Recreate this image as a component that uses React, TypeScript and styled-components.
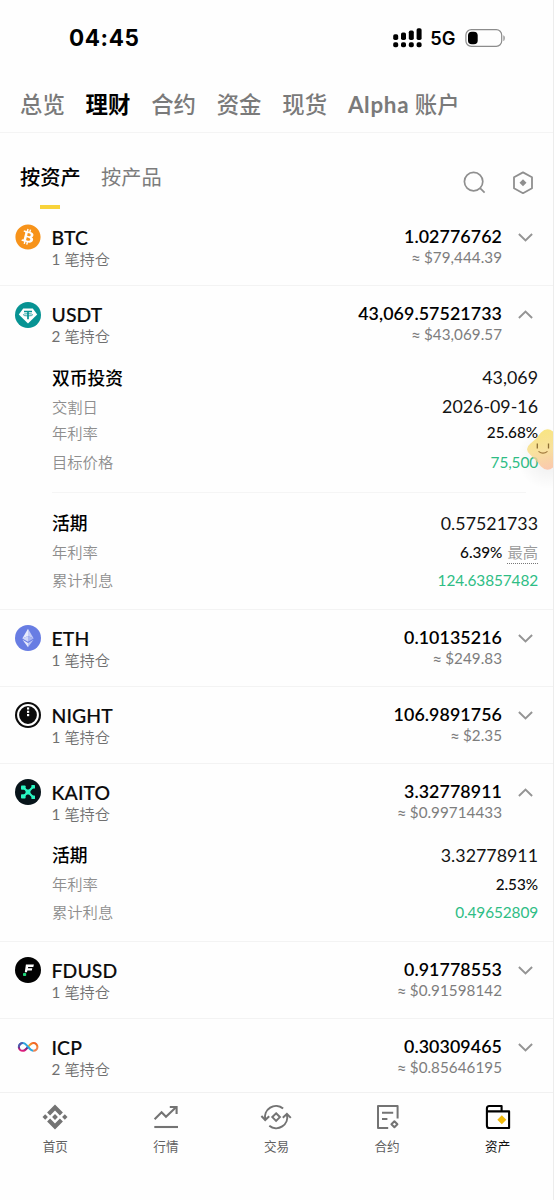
import React from "react";
import styled, { createGlobalStyle, css } from "styled-components";
import { FaBitcoin } from "react-icons/fa";

const GlobalStyle = createGlobalStyle`
  * { box-sizing: border-box; }
  body {
    margin: 0;
    background: #fefefe;
    font-family: Lato, "Noto Sans CJK SC", sans-serif;
    color: #0b0b0c;
  }
`;

const Screen = styled.div`
  position: relative;
  display: flex;
  flex-direction: column;
  width: 554px;
  height: 1200px;
  overflow: hidden;
  border-right: 1px solid #ececec;
  background: #fefefe;
`;

const StatusBar = styled.header`
  display: flex;
  align-items: center;
  justify-content: space-between;
  height: 75px;
  flex: none;
  padding: 0 47px 0 69px;
  font-family: Inter, sans-serif;
  color: #000;
`;

const Clock = styled.span`
  font-size: 22.5px;
  font-weight: 700;
  letter-spacing: 0.6px;
`;

const StatusIcons = styled.div`
  display: flex;
  align-items: center;
`;

const Network = styled.span`
  margin: 1px 9.5px 0 8.5px;
  font-size: 18.3px;
  font-weight: 600;
  letter-spacing: 0;
`;

const AccountTabs = styled.nav`
  display: flex;
  align-items: center;
  gap: 20.8px;
  height: 58px;
  flex: none;
  padding: 2px 0 0 20px;
  border-bottom: 1px solid #f4f4f4;
`;

const AccountTab = styled.span<{ $active?: boolean }>`
  font-size: 22.4px;
  line-height: 32px;
  font-weight: ${(p) => (p.$active ? 700 : 500)};
  color: ${(p) => (p.$active ? "#000" : "#7a7a7a")};
  white-space: nowrap;
`;

const TabLatin = styled.span`
  font-weight: 700;
  letter-spacing: 0.7px;
`;

const ViewBar = styled.div`
  display: flex;
  justify-content: space-between;
  height: 76px;
  flex: none;
  padding: 28.5px 19px 0 20px;
`;

const ViewTabs = styled.div`
  display: flex;
  gap: 20.5px;
`;

const ViewTab = styled.div<{ $active?: boolean }>`
  display: flex;
  flex-direction: column;
  align-items: center;
  gap: 13.5px;
  font-size: 20.2px;
  line-height: 30px;
  font-weight: ${(p) => (p.$active ? 500 : 400)};
  color: ${(p) => (p.$active ? "#000" : "#7c7c7c")};
  ${(p) =>
    p.$active &&
    css`
      &::after {
        content: "";
        width: 20px;
        height: 4px;
        background: #f8d33a;
      }
    `}
`;

const ViewTools = styled.div`
  display: flex;
  align-items: flex-start;
  gap: 26px;
  padding-top: 9.5px;
`;

const AssetList = styled.main`
  flex: 1;
  min-height: 0;
  overflow: hidden;
`;

const Asset = styled.section`
  border-bottom: 1px solid #f3f3f3;
`;

const AssetHead = styled.div<{ $open: boolean }>`
  display: grid;
  grid-template-columns: 27px 1fr auto 15px;
  height: ${(p) => (p.$open ? 75.25 : 76.25)}px;
  padding: 14px 20px 0 15px;
`;

const CoinIcon = styled.div`
  padding-top: 1.3px;
  height: 27px;
  svg { display: block; }
`;

const NameBlock = styled.div`
  padding-left: 9.5px;
`;

const Symbol = styled.div`
  padding-top: 1px;
  font-size: 19.4px;
  line-height: 27px;
  font-weight: 500;
  letter-spacing: 0.1px;
  -webkit-text-stroke: 0.15px currentColor;
`;

const Positions = styled.div`
  font-size: 15.2px;
  line-height: 17.5px;
  color: #707070;
  font-weight: 350;
`;

const Count = styled.span`
  font-weight: 400;
`;

const AmountBlock = styled.div`
  text-align: right;
  padding-right: 16px;
`;

const Amount = styled.div`
  font-size: 17.8px;
  line-height: 26px;
  font-weight: 600;
  letter-spacing: 0.1px;
  color: #000;
`;

const Fiat = styled.div`
  font-size: 15.2px;
  line-height: 17.5px;
  color: #7d7d7d;
  letter-spacing: 0.05px;
`;

const Approx = styled.span`
  font-family: Roboto, sans-serif;
  font-size: 14.5px;
  line-height: 1;
`;

const Toggle = styled.div`
  padding-top: 10px;
  svg { display: block; }
`;

const Details = styled.div<{ $last: boolean; $divided: boolean }>`
  margin: 0 15px 0 52px;
  padding: ${(p) => (p.$divided ? 14 : 0)}px 0 ${(p) => (p.$last ? 15.25 : 13)}px;
`;

const Divider = styled.div`
  height: 1px;
  margin: 0 27px 0 52px;
  background: #f5f5f5;
`;

const Line = styled.div<{ $h: number }>`
  display: flex;
  align-items: center;
  justify-content: space-between;
  height: ${(p) => p.$h}px;
`;

const Product = styled.span`
  font-size: 17.8px;
  font-weight: 500;
  color: #000;
`;

const Label = styled.span`
  font-size: 15.3px;
  font-weight: 350;
  color: #8e8e8e;
`;

type Tone = "large" | "small" | "green";

const toneStyles = {
  large: css`font-size: 17.8px; letter-spacing: 0.02px; color: #141414;`,
  small: css`font-size: 15.3px; letter-spacing: -0.05px; font-weight: 500; color: #0c0c0c;`,
  green: css`font-size: 15.4px; letter-spacing: -0.12px; color: #2ebd85;`,
};

const Value = styled.span<{ $tone: Tone }>`
  display: flex;
  align-items: center;
  gap: 5px;
  padding-top: 1.4px;
  ${(p) => toneStyles[p.$tone]}
`;

const Highest = styled.span`
  margin-top: 1px;
  font-size: 15.3px;
  line-height: 22px;
  font-weight: 350;
  letter-spacing: 0;
  color: #999;
  border-bottom: 1px dotted #777;
`;

const BottomNav = styled.nav`
  display: grid;
  grid-template-columns: repeat(5, 1fr);
  height: 108px;
  flex: none;
  border-top: 1px solid #f1f1f1;
  background: #fefefe;
`;

const NavItem = styled.div<{ $active?: boolean }>`
  display: flex;
  flex-direction: column;
  align-items: center;
  padding-top: 8px;
  gap: 5px;
  font-size: 12.6px;
  line-height: 18px;
  color: ${(p) => (p.$active ? "#111" : "#606060")};
  svg { color: ${(p) => (p.$active ? "#000" : "#737373")}; }
`;

const Mascot = styled.div`
  position: absolute;
  top: 420px;
  right: 0;
  width: 36px;
  height: 70px;
  overflow: hidden;
`;

const Signal = () => (
  <svg width="29" height="20" viewBox="0 0 29 20" fill="currentColor">
    {[6.2, 4.5, 2.6, 0.3].map((top, i) => (
      <g key={i}>
        <rect x={0.2 + i * 7.8} y={top} width="5" height={12 - top} rx="1.7" />
        <rect x={0.2 + i * 7.8} y="14.2" width="5" height="5" rx="1.8" />
      </g>
    ))}
  </svg>
);

const Battery = () => (
  <svg width="41" height="18" viewBox="0 0 41 18">
    <rect x="0.9" y="0.7" width="35.8" height="16.6" rx="5.4" fill="none" stroke="#8c8c8c" strokeWidth="1.2" />
    <rect x="3" y="2.8" width="9.7" height="12.4" rx="3.8" fill="#000" />
    <path d="M38.4 6.2c1.8.6 1.8 5.2 0 5.8z" fill="#8c8c8c" />
  </svg>
);

const SearchIcon = () => (
  <svg width="23" height="23" viewBox="0 0 23 23" fill="none" stroke="#8f8f8f" strokeWidth="1.7">
    <circle cx="10.6" cy="10.6" r="9.2" />
    <path d="M16.8 16.8l4.8 4.8" />
  </svg>
);

const HexIcon = () => (
  <svg width="22" height="24" viewBox="0 0 22 24" fill="none" stroke="#8f8f8f" strokeWidth="1.8" strokeLinejoin="round">
    <path d="M11 1.4L20 6.3V17.2L11 22.2L2 17.2V6.3Z" />
    <path d="M11 8.3L14.5 11.8L11 15.3L7.5 11.8Z" fill="#8f8f8f" stroke="none" />
  </svg>
);

const Chevron = ({ up }: { up?: boolean }) => (
  <svg width="15" height="9" viewBox="0 0 15 9" fill="none" stroke="#949494" strokeWidth="1.9">
    <path d={up ? "M0.9 8L7.5 1.5L14.1 8" : "M0.9 1L7.5 7.5L14.1 1"} />
  </svg>
);

const UsdtIcon = () => (
  <svg width="26" height="26" viewBox="0 0 26 26">
    <circle cx="13" cy="13" r="13" fill="#079393" />
    <path d="M8.2 6.6H17.8L22.2 12.6L13 21.6L3.8 12.6Z" fill="#fff" />
    <path d="M9 9.5H17M13 9.5V17.2" stroke="#079393" strokeWidth="1.7" fill="none" />
    <ellipse cx="13" cy="12.8" rx="4.6" ry="1.1" stroke="#079393" strokeWidth="0.8" fill="none" />
  </svg>
);

const EthIcon = () => (
  <svg width="26" height="26" viewBox="0 0 26 26">
    <circle cx="13" cy="13" r="13" fill="#687de3" />
    <path d="M13 3.8V10.9L7.3 13.4Z" fill="#e8ebfc" />
    <path d="M13 3.8L18.7 13.4L13 10.9Z" fill="#c5cdf7" />
    <path d="M7.3 13.4L13 10.9V16.8Z" fill="#cfd6f9" />
    <path d="M18.7 13.4L13 16.8V10.9Z" fill="#a9b5f1" />
    <path d="M7.5 14.8L13 18.1V22.2Z" fill="#e8ebfc" />
    <path d="M18.5 14.8L13 18.1V22.2Z" fill="#bcc6f6" />
  </svg>
);

const NightIcon = () => (
  <svg width="26" height="26" viewBox="0 0 26 26">
    <circle cx="13" cy="13" r="13" fill="#0b0b0b" />
    <circle cx="13" cy="13" r="9.9" fill="none" stroke="#fff" strokeWidth="2" />
    <g fill="#fff">
      <rect x="12" y="5.4" width="2.2" height="2.2" />
      <rect x="12" y="8.7" width="2.2" height="2.2" />
      <rect x="12" y="12" width="2.2" height="2.2" />
    </g>
  </svg>
);

const KaitoIcon = () => (
  <svg width="26" height="26" viewBox="0 0 26 26">
    <circle cx="13" cy="13" r="13" fill="#07141a" />
    <path d="M9.5 9.5L13 13L9.5 16.5M18.2 7.8L13 13L18.2 18.2" stroke="#2af5c2" strokeWidth="2" fill="none" />
    <g fill="#2af5c2">
      <rect x="6" y="6.4" width="4.6" height="4.4" rx="0.8" />
      <rect x="6" y="15.2" width="4.6" height="4.4" rx="0.8" />
      <rect x="10.6" y="10.6" width="4.8" height="4.8" rx="0.8" />
      <rect x="16.4" y="6" width="3.6" height="3.6" rx="0.6" />
      <rect x="16.4" y="16.4" width="3.6" height="3.6" rx="0.6" />
    </g>
  </svg>
);

const FdusdIcon = () => (
  <svg width="26" height="26" viewBox="0 0 26 26">
    <circle cx="13" cy="13" r="13" fill="#020202" />
    <path d="M10.9 7.6H18.9L18.3 9.9H13.2L12.9 11.3H17.3L16.8 13.4H12.4L11.9 15.2H9.8Z" fill="#fff" />
    <rect x="8" y="16" width="3.2" height="3" rx="0.8" fill="#1fd77a" />
  </svg>
);

const IcpIcon = () => (
  <svg width="26" height="26" viewBox="0 0 26 26" fill="none" strokeWidth="2.1">
    <defs>
      <linearGradient id="icpWarm" x1="0" y1="1" x2="1" y2="0">
        <stop offset="0.2" stopColor="#f5b12f" />
        <stop offset="0.9" stopColor="#f05a24" />
      </linearGradient>
      <linearGradient id="icpCool" x1="0.6" y1="0" x2="0.3" y2="1">
        <stop offset="0" stopColor="#4b2a86" />
        <stop offset="1" stopColor="#e51e7d" />
      </linearGradient>
    </defs>
    <path d="M13 13C10.8 15.8 9.4 16.8 7.8 16.8A3.9 3.9 0 0 1 3.9 12.9" stroke="url(#icpCool)" />
    <path d="M13 13C15.2 10.2 16.9 9 18.5 9A3.9 3.9 0 0 1 22.4 13" stroke="url(#icpWarm)" />
    <path d="M3.9 13A3.9 3.9 0 0 1 7.8 9C12.2 9 14 16.8 18.5 16.8" stroke="#2da7df" />
    <path d="M18.3 16.8A3.9 3.9 0 0 0 22.4 12.9" stroke="#ef8350" />
    <path d="M3.9 13.3A3.9 3.9 0 0 1 7.8 9" stroke="#5557a8" />
  </svg>
);

const HomeIcon = () => (
  <svg width="32" height="32" viewBox="-3.5 -3.5 32 32" fill="currentColor">
    <path d="M12.5 0L20.4 7.9L17.4 10.9L12.5 6L7.6 10.9L4.6 7.9Z" />
    <path d="M12.5 25L20.4 17.1L17.4 14.1L12.5 19L7.6 14.1L4.6 17.1Z" />
    <path d="M12.5 9.6L15.4 12.5L12.5 15.4L9.6 12.5Z" />
    <path d="M2.7 9.8L5.4 12.5L2.7 15.2L0 12.5Z" />
    <path d="M22.3 9.8L25 12.5L22.3 15.2L19.6 12.5Z" />
  </svg>
);

const MarketIcon = () => (
  <svg width="32" height="32" viewBox="0 0 32 32" fill="none" stroke="currentColor" strokeWidth="2.1">
    <path d="M4.6 18.2L11.6 11.2L16 15.8L26 6.3" />
    <path d="M19.8 6H26.6V13" />
    <path d="M4.3 26H28" />
  </svg>
);

const TradeIcon = () => (
  <svg width="32" height="32" viewBox="0 0 32 32" fill="none" stroke="currentColor" strokeWidth="2">
    <path d="M23.1 7.6A11 11 0 0 0 5.3 18.6" />
    <path d="M1.4 15L5.2 19L9.2 15.2" />
    <path d="M9.3 24.7A11 11 0 0 0 26.9 13.4" />
    <path d="M22.8 16.8L26.9 12.9L30.8 16.9" />
    <path d="M16.1 12.3L19.9 16.1L16.1 19.9L12.3 16.1Z" />
  </svg>
);

const FuturesIcon = () => (
  <svg width="32" height="32" viewBox="0 0 32 32" fill="none" stroke="currentColor" strokeWidth="2" strokeLinejoin="round">
    <path d="M17.2 27H7V5H26.6V17.4" />
    <path d="M11 11.8H22.2M11 18H16.4" />
    <path d="M23.4 20.2L26.4 23.2L23.4 26.2L20.4 23.2Z" />
  </svg>
);

const WalletIcon = () => (
  <svg width="32" height="32" viewBox="0 0 32 32" fill="none" stroke="currentColor" strokeWidth="2.1" strokeLinejoin="round">
    <path d="M4.9 10.4V24.4Q4.9 27 7.4 27H27.1V10.4H4.9V7.5Q4.9 5 7.4 5H19.6V10" />
    <path d="M19.8 14.2L24.3 18.7L19.8 23.2L15.3 18.7Z" fill="#f0b90b" stroke="none" />
  </svg>
);

const MascotFace = () => (
  <svg width="36" height="70" viewBox="0 0 36 70">
    <defs>
      <linearGradient id="face" x1="0.4" y1="0" x2="0.6" y2="1">
        <stop offset="0" stopColor="#f7df62" />
        <stop offset="0.5" stopColor="#fadd88" />
        <stop offset="1" stopColor="#fdbd9e" />
      </linearGradient>
      <radialGradient id="shade">
        <stop offset="0" stopColor="#000" stopOpacity="0.07" />
        <stop offset="1" stopColor="#000" stopOpacity="0" />
      </radialGradient>
    </defs>
    <ellipse cx="31" cy="38" rx="31" ry="31" fill="url(#shade)" />
    <path
      d="M24 12.5Q30.5 6 37 12.5Q42 19 48 22V36Q42 40 37 46.500Q30.5 53 24 46.500Q19.500 40 13.500 35Q6.500 29 13.500 23.500Q19.500 19 24 12.500Z"
      fill="url(#face)"
      fillOpacity="0.8"
    />
    <path d="M20.3 23.5V28.4M31.5 23.5V28.4" stroke="#8d6f33" strokeWidth="1.3" />
    <path d="M21.5 31.3Q26 35 30.5 31.3" stroke="#a0783c" strokeWidth="1.1" fill="none" />
  </svg>
);

interface DetailLine {
  label: string;
  value: string;
  tone: Tone;
  height: number;
  highest?: boolean;
}
interface Holding {
  product: string;
  amount: string;
  lines: DetailLine[];
}
interface AssetData {
  symbol: string;
  count: number;
  amount: string;
  fiat: string;
  icon: React.ReactNode;
  holdings?: Holding[];
}

const assets: AssetData[] = [
  { symbol: "BTC", count: 1, amount: "1.02776762", fiat: "79,444.39", icon: <FaBitcoin size={26} color="#f7931a" /> },
  {
    symbol: "USDT", count: 2, amount: "43,069.57521733", fiat: "43,069.57", icon: <UsdtIcon />,
    holdings: [
      {
        product: "双币投资", amount: "43,069",
        lines: [
          { label: "交割日", value: "2026-09-16", tone: "large", height: 28 },
          { label: "年利率", value: "25.68%", tone: "small", height: 24 },
          { label: "目标价格", value: "75,500", tone: "green", height: 35.75 },
        ],
      },
      {
        product: "活期", amount: "0.57521733",
        lines: [
          { label: "年利率", value: "6.39%", tone: "small", height: 28, highest: true },
          { label: "累计利息", value: "124.63857482", tone: "green", height: 28 },
        ],
      },
    ],
  },
  { symbol: "ETH", count: 1, amount: "0.10135216", fiat: "249.83", icon: <EthIcon /> },
  { symbol: "NIGHT", count: 1, amount: "106.9891756", fiat: "2.35", icon: <NightIcon /> },
  {
    symbol: "KAITO", count: 1, amount: "3.32778911", fiat: "0.99714433", icon: <KaitoIcon />,
    holdings: [
      {
        product: "活期", amount: "3.32778911",
        lines: [
          { label: "年利率", value: "2.53%", tone: "small", height: 28 },
          { label: "累计利息", value: "0.49652809", tone: "green", height: 28 },
        ],
      },
    ],
  },
  { symbol: "FDUSD", count: 1, amount: "0.91778553", fiat: "0.91598142", icon: <FdusdIcon /> },
  { symbol: "ICP", count: 2, amount: "0.30309465", fiat: "0.85646195", icon: <IcpIcon /> },
];

const AssetRow = ({ asset }: { asset: AssetData }) => (
  <Asset>
    <AssetHead $open={!!asset.holdings}>
      <CoinIcon>{asset.icon}</CoinIcon>
      <NameBlock>
        <Symbol>{asset.symbol}</Symbol>
        <Positions><Count>{asset.count}</Count> 笔持仓</Positions>
      </NameBlock>
      <AmountBlock>
        <Amount>{asset.amount}</Amount>
        <Fiat><Approx>≈</Approx> ${asset.fiat}</Fiat>
      </AmountBlock>
      <Toggle><Chevron up={!!asset.holdings} /></Toggle>
    </AssetHead>
    {asset.holdings?.map((h, i, all) => (
      <React.Fragment key={h.product}>
        {i > 0 && <Divider />}
        <Details $divided={i > 0} $last={i === all.length - 1}>
          <Line $h={30}>
            <Product>{h.product}</Product>
            <Value $tone="large">{h.amount}</Value>
          </Line>
          {h.lines.map((l) => (
            <Line key={l.label} $h={l.height}>
              <Label>{l.label}</Label>
              <Value $tone={l.tone}>
                {l.value}
                {l.highest && <Highest>最高</Highest>}
              </Value>
            </Line>
          ))}
        </Details>
      </React.Fragment>
    ))}
  </Asset>
);

export default function App() {
  return (
    <Screen>
      <GlobalStyle />
      <StatusBar>
        <Clock>04:45</Clock>
        <StatusIcons>
          <Signal />
          <Network>5G</Network>
          <Battery />
        </StatusIcons>
      </StatusBar>
      <AccountTabs>
        <AccountTab>总览</AccountTab>
        <AccountTab $active>理财</AccountTab>
        <AccountTab>合约</AccountTab>
        <AccountTab>资金</AccountTab>
        <AccountTab>现货</AccountTab>
        <AccountTab><TabLatin>Alpha</TabLatin> 账户</AccountTab>
      </AccountTabs>
      <ViewBar>
        <ViewTabs>
          <ViewTab $active>按资产</ViewTab>
          <ViewTab>按产品</ViewTab>
        </ViewTabs>
        <ViewTools>
          <SearchIcon />
          <HexIcon />
        </ViewTools>
      </ViewBar>
      <AssetList>
        {assets.map((a) => (
          <AssetRow key={a.symbol} asset={a} />
        ))}
      </AssetList>
      <BottomNav>
        <NavItem><HomeIcon />首页</NavItem>
        <NavItem><MarketIcon />行情</NavItem>
        <NavItem><TradeIcon />交易</NavItem>
        <NavItem><FuturesIcon />合约</NavItem>
        <NavItem $active><WalletIcon />资产</NavItem>
      </BottomNav>
      <Mascot><MascotFace /></Mascot>
    </Screen>
  );
}
